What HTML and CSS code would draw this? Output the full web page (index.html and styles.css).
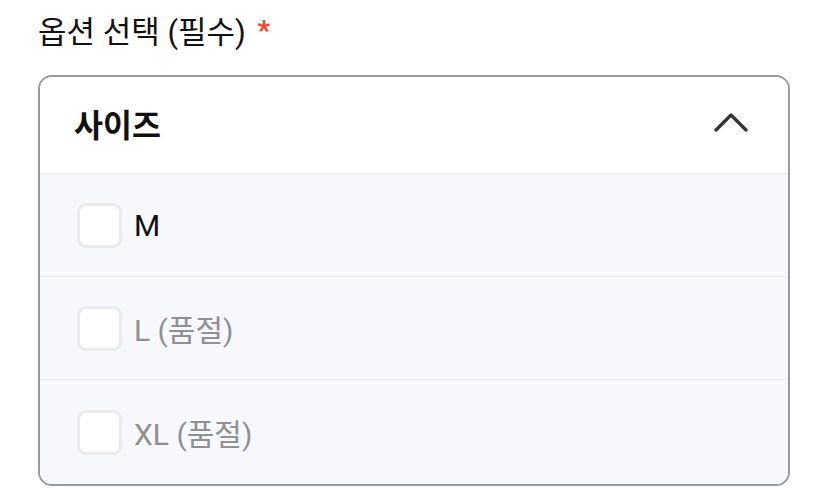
FILE: index.html
```html
<!DOCTYPE html>
<html lang="ko">
<head>
<meta charset="utf-8">
<link rel="stylesheet" href="styles.css">
</head>
<body>
<div class="page">
  <div class="label">옵션 선택 (필수) <span class="req">*</span></div>
  <div class="box">
    <div class="head">
      <span class="title">사이즈</span>
      <svg class="chev" width="34" height="22" viewBox="0 0 34 22"><path d="M2 18 L17 3 L32 18" fill="none" stroke="#333" stroke-width="3.2" stroke-linecap="round" stroke-linejoin="round"/></svg>
    </div>
    <div class="list">
      <div class="row"><span class="cb"></span><span class="opt">M</span></div>
      <div class="row"><span class="cb"></span><span class="opt off">L (품절)</span></div>
      <div class="row"><span class="cb"></span><span class="opt off">XL (품절)</span></div>
    </div>
  </div>
</div>
</body>
</html>
```
FILE: styles.css
```css
html, body { margin: 0; padding: 0; background: #fff; }
body { font-family: Roboto, "Noto Sans CJK KR", sans-serif; color: #111; }
.page { padding: 10px 38px 0 38px; }
.label { font-size: 31px; line-height: 42px; font-weight: 400; color: #111; }
.req { color: #f2452f; font-weight: 700; font-size: 28px; vertical-align: 3px; margin-left: 4px; }
.box { margin-top: 21px; border: 2px solid #9a9a9a; border-radius: 14px; overflow: hidden; }
.head { height: 97px; display: flex; align-items: center; justify-content: space-between; padding: 0 40px 4px 34px; box-sizing: border-box; background: #fff; border-bottom: 1px solid #e6e8ec; }
.title { font-size: 31.5px; font-weight: 700; color: #111; }
.chev { display: block; }
.list { background: #f7f8fb; }
.row { height: 103px; display: flex; align-items: center; padding-left: 37px; gap: 12px; border-top: 1px solid #eceef2; box-sizing: border-box; }
.row:first-child { border-top: none; height: 102px; }
.row:last-child { height: 105px; }
.cb { width: 39px; height: 39px; border: 3px solid #ebebed; border-radius: 9px; background: #fff; box-sizing: content-box; }
.opt { font-size: 30px; color: #111; }
.opt.off { color: #8f8f94; }
```
